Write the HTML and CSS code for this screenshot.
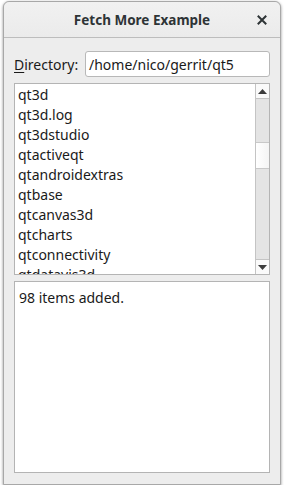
FILE: index.html
```html
<!DOCTYPE html>
<html>
<head>
<meta charset="utf-8">
<link rel="stylesheet" href="styles.css">
</head>
<body>
<div class="window">
  <div class="titlebar">
    <span class="title">Fetch More Example</span>
    <span class="close">
      <svg width="10" height="10" viewBox="0 0 10 10"><path d="M1.5 1.5 L8.5 8.5 M8.5 1.5 L1.5 8.5" stroke="#2e3436" stroke-width="2" stroke-linecap="square"/></svg>
    </span>
  </div>
  <div class="content">
    <div class="dirrow">
      <label class="dirlabel"><u>D</u>irectory:</label>
      <div class="input">/home/nico/gerrit/qt5</div>
    </div>
    <div class="list">
      <div class="items">
        <div class="item">qt3d</div>
        <div class="item">qt3d.log</div>
        <div class="item">qt3dstudio</div>
        <div class="item">qtactiveqt</div>
        <div class="item">qtandroidextras</div>
        <div class="item">qtbase</div>
        <div class="item">qtcanvas3d</div>
        <div class="item">qtcharts</div>
        <div class="item">qtconnectivity</div>
        <div class="item">qtdatavis3d</div>
      </div>
      <div class="scrollbar">
        <div class="sbtn"><svg width="9" height="5" viewBox="0 0 9 5"><path d="M0 5 L4.5 0 L9 5 Z" fill="#3c3c3c"/></svg></div>
        <div class="track">
          <div class="thumb"></div>
        </div>
        <div class="sbtn sbtn-down"><svg width="9" height="5" viewBox="0 0 9 5"><path d="M0 0 L4.5 5 L9 0 Z" fill="#3c3c3c"/></svg></div>
      </div>
    </div>
    <div class="log">98 items added.</div>
  </div>
</div>
</body>
</html>
```

FILE: styles.css
```css
html, body {
  margin: 0;
  padding: 0;
  background: #ffffff;
}
body {
  font-family: "Noto Sans", "DejaVu Sans", sans-serif;
  color: #1a1a1a;
}
.window {
  box-sizing: border-box;
  margin: 1px 0 0 3px;
  width: 278px;
  height: 484px;
  border: 1px solid #a8a8a8;
  border-radius: 6px 6px 0 0;
  background: #ededed;
  box-shadow: 0 1px 3px rgba(0,0,0,0.45);
  display: flex;
  flex-direction: column;
}
.titlebar {
  height: 35px;
  border-bottom: 1px solid #bdbdbd;
  border-radius: 6px 6px 0 0;
  background: linear-gradient(#f1f1f1, #ebebeb);
  display: flex;
  align-items: center;
  justify-content: center;
  position: relative;
}
.title {
  font-weight: bold;
  font-size: 13.5px;
  color: #2e3436;
}
.close {
  position: absolute;
  right: 13px;
  top: 13px;
  width: 10px;
  height: 10px;
  display: flex;
}
.content {
  flex: 1;
  padding: 13px 10px 10px 10px;
  display: flex;
  flex-direction: column;
}
.dirrow {
  display: flex;
  align-items: center;
  height: 26px;
}
.dirlabel {
  font-size: 14px;
  width: 71px;
  color: #1a1a1a;
}
.dirlabel u {
  text-decoration-thickness: 1px;
  text-underline-offset: 2px;
}
.input {
  box-sizing: border-box;
  flex: 1;
  height: 26px;
  border: 1px solid #b8b8b8;
  border-radius: 3px;
  background: #fff;
  font-size: 14px;
  padding: 0 0 0 3px;
  display: flex;
  align-items: center;
}
.list {
  box-sizing: border-box;
  margin-top: 6px;
  height: 192px;
  border: 1px solid #b4b4b4;
  background: #fff;
  display: flex;
  overflow: hidden;
}
.items {
  flex: 1;
  overflow: hidden;
  padding: 1px 0 0 3px;
}
.item {
  height: 20px;
  line-height: 20px;
  font-size: 14px;
  white-space: nowrap;
}
.scrollbar {
  width: 13px;
  border-left: 1px solid #c4c4c4;
  display: flex;
  flex-direction: column;
  background: #f3f3f3;
}
.sbtn {
  height: 14px;
  border-bottom: 1px solid #c4c4c4;
  display: flex;
  align-items: center;
  justify-content: center;
  background: #fafafa;
}
.sbtn-down {
  border-bottom: none;
  border-top: 1px solid #c4c4c4;
}
.track {
  flex: 1;
  background: #e4e4e4;
  padding-top: 43px;
}
.thumb {
  height: 25px;
  border-top: 1px solid #c8c8c8;
  border-bottom: 1px solid #c8c8c8;
  background: linear-gradient(90deg, #ffffff, #f4f4f4);
}
.log {
  box-sizing: border-box;
  margin-top: 6px;
  height: 192px;
  border: 1px solid #b4b4b4;
  background: #fff;
  font-size: 14px;
  padding: 6px 0 0 4px;
}
```
